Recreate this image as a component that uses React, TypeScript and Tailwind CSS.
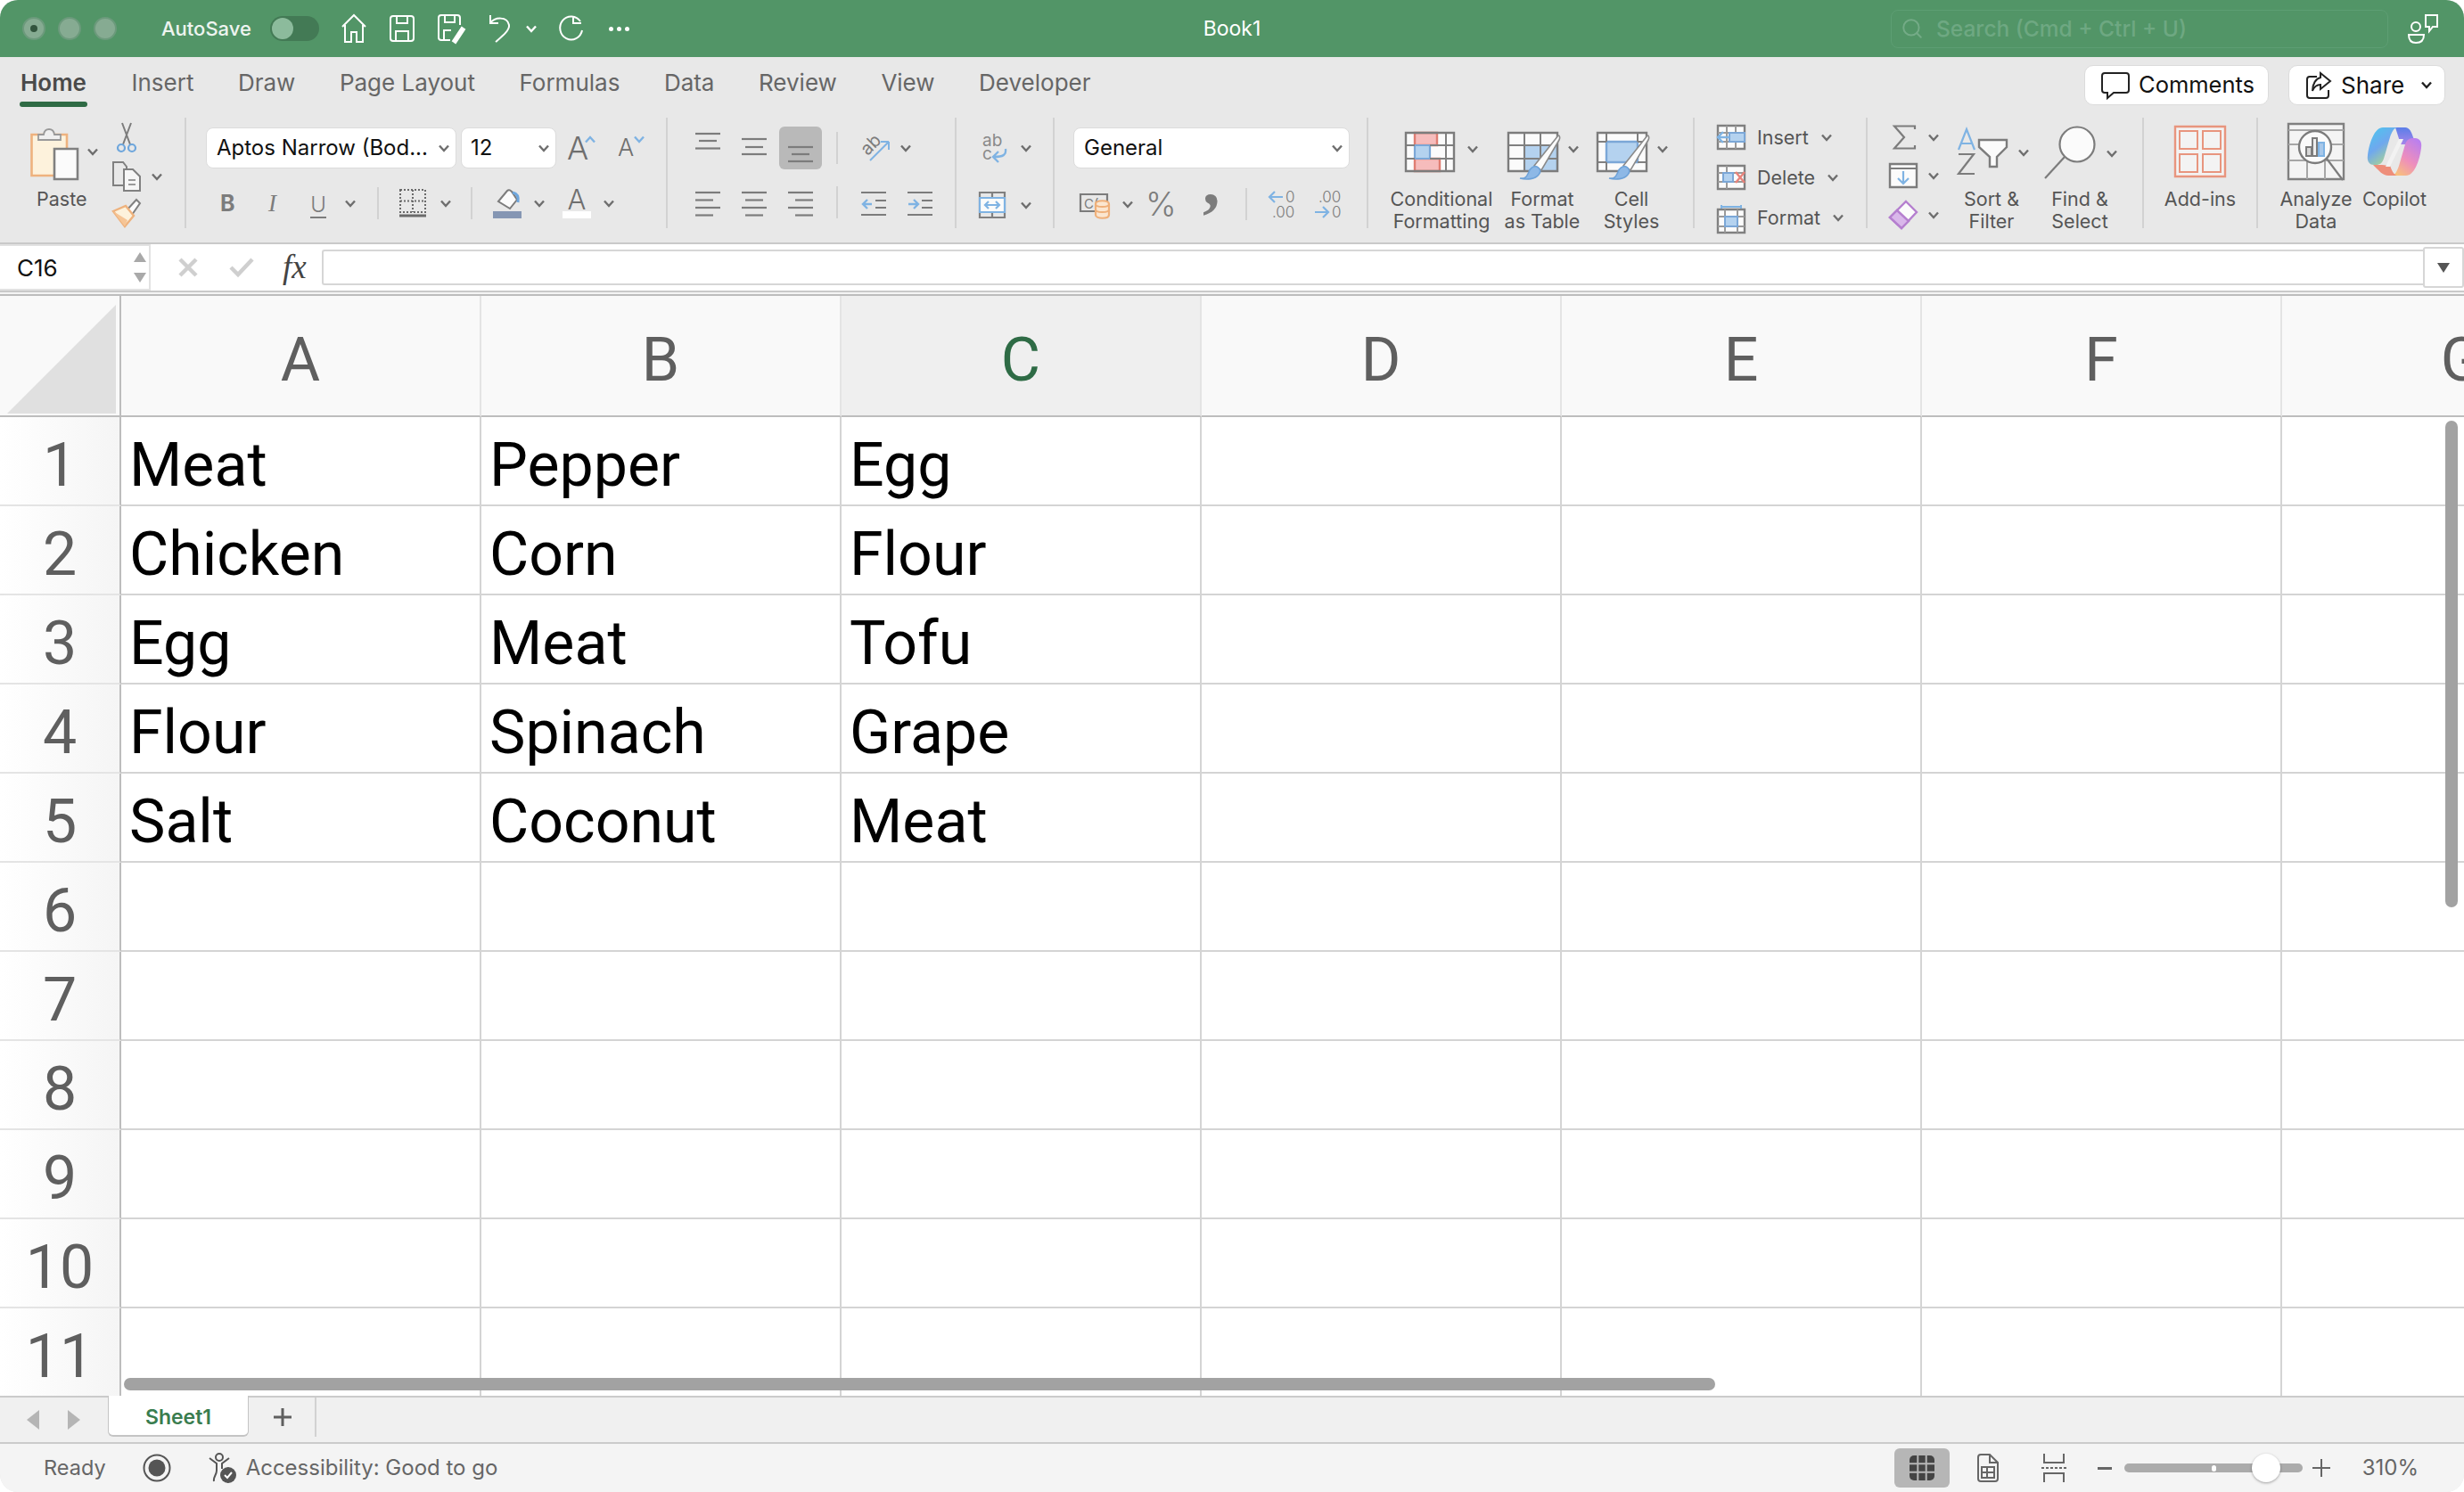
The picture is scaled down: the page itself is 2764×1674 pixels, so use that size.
import type { ReactNode } from "react";
import { Search } from "lucide-react";

const columns = ["A", "B", "C", "D", "E", "F", "G"];
const rows = [1, 2, 3, 4, 5, 6, 7, 8, 9, 10, 11];
const data: Record<number, string[]> = {
  1: ["Meat", "Pepper", "Egg"],
  2: ["Chicken", "Corn", "Flour"],
  3: ["Egg", "Meat", "Tofu"],
  4: ["Flour", "Spinach", "Grape"],
  5: ["Salt", "Coconut", "Meat"],
};
const tabs = ["Home", "Insert", "Draw", "Page Layout", "Formulas", "Data", "Review", "View", "Developer"];

const GRAY = "#7c7c7c";
const BLUE = "#7fb3e3";
const PAPER = "#fbfbfb";

function Caret({ className = "", color = "#6e6e6e" }: { className?: string; color?: string }) {
  return (
    <svg width="12" height="9" viewBox="0 0 12 9" className={`shrink-0 ${className}`} fill="none" stroke={color} strokeWidth="2.4">
      <path d="M1 1.5 6 7l5-5.5" />
    </svg>
  );
}

function Icon({ w, h, children, className = "" }: { w: number; h: number; children: ReactNode; className?: string }) {
  return (
    <svg width={w} height={h} viewBox={`0 0 ${w} ${h}`} className={`shrink-0 overflow-visible ${className}`} fill="none" stroke={GRAY} strokeWidth="2">
      {children}
    </svg>
  );
}

// three lines for the vertical alignment buttons, four for the horizontal ones
function Lines({ ys, align = "center", height = 48 }: { ys: number[]; align?: "left" | "center" | "right"; height?: number }) {
  return (
    <Icon w={28} h={height}>
      {ys.map((y, i) => {
        const short = i % 2 === 1;
        const x1 = !short ? 0 : align === "left" ? 0 : align === "center" ? 4 : 8;
        const x2 = !short ? 28 : align === "left" ? 20 : align === "center" ? 24 : 28;
        return <path key={y} d={`M${x1} ${y}H${x2}`} strokeWidth="2.2" />;
      })}
    </Icon>
  );
}

function Indent({ flip = false }: { flip?: boolean }) {
  return (
    <Icon w={28} h={32}>
      <path d="M0 5H28M16 14H28M16 22H28M0 30H28" strokeWidth="2.2" />
      {flip ? <path d="M1 18H11M7 13l5 5-5 5" stroke={BLUE} strokeWidth="2.4" /> : <path d="M12 18H2M7 13l-5 5 5 5" stroke={BLUE} strokeWidth="2.4" />}
    </Icon>
  );
}

function Sep({ className = "" }: { className?: string }) {
  return <div className={`w-[2px] h-[36px] bg-[#d2d2d2] shrink-0 ${className}`} />;
}

function BigButton({ label, width, children, className = "" }: { label: ReactNode; width: number; children: ReactNode; className?: string }) {
  return (
    <div className={`flex flex-col items-center shrink-0 ${className}`} style={{ width }}>
      <div className="h-[79px] shrink-0 flex items-start justify-center">{children}</div>
      <div className="shrink-0 text-[21.5px] leading-[24.5px] text-[#555] text-center whitespace-nowrap">{label}</div>
    </div>
  );
}

function Brush() {
  return (
    <>
      <path d="M30 38 57 4c2 0 2 3 1 5L38 43Z" fill={PAPER} stroke="#8a8a8a" strokeWidth="1.6" />
      <path d="M14 52c7 1 8-3 10-7 1-4 5-7 9-6 4 2 5 6 2 9-4 5-13 6-21 4Z" fill="#8db8e6" stroke="#6ea2d8" strokeWidth="1.6" />
    </>
  );
}

function CellRows() {
  return (
    <div className="flex flex-col gap-[17px] pt-[8px] pl-[25px]">
      <div className="flex items-center h-[28px]">
        <Icon w={32} h={28}>
          <path d="M1 1H31V27H1Z" fill={PAPER} stroke="#808080" strokeWidth="2.4" />
          <path d="M1 9H31M1 19H31M11 1V27M21 1V27" stroke="#9a9a9a" />
          <path d="M14 9H31V19H14Z" fill="#b4d2ef" stroke="#7ba7d7" />
          <path d="M14 14H2M7 8l-6 6 6 6" stroke={BLUE} strokeWidth="2.4" />
        </Icon>
        <span className="ml-[13px] text-[21.5px] text-[#555]">Insert</span>
        <Caret className="ml-[14px]" />
      </div>
      <div className="flex items-center h-[28px]">
        <Icon w={32} h={28}>
          <path d="M1 1H31V27H1Z" fill={PAPER} stroke="#808080" strokeWidth="2.4" />
          <path d="M1 9H31M1 19H31M11 1V27" stroke="#9a9a9a" />
          <path d="M7 9H18V19H7Z" fill="#b4d2ef" stroke="#7ba7d7" />
          <path d="M21 8 31 20M31 8 21 20" stroke="#e8827a" strokeWidth="2.4" />
        </Icon>
        <span className="ml-[13px] text-[21.5px] text-[#555]">Delete</span>
        <Caret className="ml-[14px]" />
      </div>
      <div className="flex items-center h-[28px]">
        <Icon w={32} h={32} className="mt-[4px]">
          <path d="M1 5H31V31H1Z" fill={PAPER} stroke="#808080" strokeWidth="2.4" />
          <path d="M1 13H31M1 24H31M9 5V31M23 5V31" stroke="#9a9a9a" />
          <path d="M9 13H23V24H9Z" fill="#b4d2ef" stroke="#7ba7d7" />
          <path d="M5 0V4M27 0V4M5 2H27" stroke={BLUE} />
        </Icon>
        <span className="ml-[13px] text-[21.5px] text-[#555]">Format</span>
        <Caret className="ml-[14px]" />
      </div>
    </div>
  );
}

function Ribbon() {
  return (
    <div className="h-[152px] shrink-0 flex pt-[12px] text-[#555]">
      {/* clipboard */}
      <div className="w-[209px] h-[124px] border-r-2 border-[#d2d2d2] flex shrink-0">
        <div className="w-[122px] flex flex-col">
          <div className="flex items-start h-[76px] pt-[11px] pl-[34px]">
            <Icon w={55} h={60}>
              <path d="M1.5 8H41V54H1.5Z" fill="#fdf2dc" stroke="#eeb27e" strokeWidth="2.6" />
              <path d="M9 14V8H15C16 0 26 0 27 8H34V14Z" fill="#efefef" stroke="#999" strokeWidth="1.8" />
              <path d="M27 24H53V58H27Z" fill={PAPER} stroke="#808080" strokeWidth="2.6" />
            </Icon>
            <Caret className="ml-[9px] mt-[23px]" />
          </div>
          <div className="text-[21.5px] leading-[24px] text-[#555] pl-[41px] mt-[3px]">Paste</div>
        </div>
        <div className="flex flex-col pl-[4px]">
          <div className="h-[44px] pl-[5px] pt-[6px]">
            <Icon w={22} h={34}>
              <path d="M6 0 15 24M16 0 7 24" stroke="#7c7c7c" />
              <circle cx="5" cy="28" r="4" stroke="#6ea6dc" strokeWidth="2.2" />
              <circle cx="17" cy="28" r="4" stroke="#6ea6dc" strokeWidth="2.2" />
            </Icon>
          </div>
          <div className="h-[44px] flex items-center">
            <Icon w={32} h={34}>
              <path d="M14 27H1V1H12L16 6V10" stroke="#808080" />
              <path d="M13 9H23L31 17V33H13Z" fill="#f6f6f6" stroke="#808080" />
              <path d="M18 21H26M18 26H26" strokeWidth="1.6" />
            </Icon>
            <Caret className="ml-[12px]" />
          </div>
          <div className="h-[36px] pt-[3px]">
            <Icon w={32} h={32}>
              <path d="M16 13 27 1l4 4-9 13" fill={PAPER} stroke="#808080" />
              <path d="M1 14 15 8l9 11-10 12Z" fill="#fdf2dc" stroke="#eeb27e" strokeWidth="2.4" />
              <path d="M1 14 17 24 14 31Z" fill="#f6c596" stroke="none" />
            </Icon>
          </div>
        </div>
      </div>

      {/* font */}
      <div className="w-[540px] h-[124px] border-r-2 border-[#d2d2d2] shrink-0 pl-[22px] flex flex-col">
        <div className="flex items-center h-[46px] mt-[11px]">
          <div className="w-[281px] h-[46px] bg-white rounded-[8px] border border-[#dcdcdc] flex items-center pl-[11px] pr-[7px] justify-between">
            <span className="text-[24px] text-[#111] whitespace-nowrap">Aptos Narrow (Bod...</span>
            <Caret />
          </div>
          <div className="w-[107px] h-[46px] ml-[5px] bg-white rounded-[8px] border border-[#dcdcdc] flex items-center pl-[10px] pr-[7px] justify-between">
            <span className="text-[24px] text-[#111]">12</span>
            <Caret />
          </div>
          <div className="ml-[12px] flex items-start w-[39px]">
            <span className="text-[36px] leading-[44px] font-light text-[#6f6f6f]">A</span>
            <Caret className="rotate-180 mt-[8px] ml-[-4px]" color={BLUE} />
          </div>
          <div className="ml-[18px] flex items-start">
            <span className="text-[27px] leading-[44px] font-light text-[#6f6f6f]">A</span>
            <Caret className="mt-[8px]" color={BLUE} />
          </div>
        </div>
        <div className="flex items-center h-[36px] mt-[21px] pl-[16px]">
          <span className="w-[54px] text-[25px] leading-[36px] font-bold text-[#7c7c7c]">B</span>
          <span className="w-[47px] text-[27px] leading-[36px] italic text-[#7c7c7c] font-['Liberation_Serif',serif]">I</span>
          <span className="w-[18px] text-[24px] leading-[36px] font-light text-[#7c7c7c] border-b-2 border-[#7c7c7c] h-[33px] flex justify-center">U</span>
          <Caret className="ml-[21px]" />
          <Sep className="ml-[24px]" />
          <Icon w={30} h={32} className="ml-[23px]">
            <path d="M1 1H29V26H1ZM1 13.5H29M15 1V26" strokeDasharray="2 2" stroke="#6a6a6a" />
            <path d="M0 30H30" stroke="#6a6a6a" strokeWidth="3" />
          </Icon>
          <Caret className="ml-[16px]" />
          <Sep className="ml-[22px]" />
          <Icon w={32} h={34} className="ml-[23px]">
            <path d="M6 15 16 3c2-2 4 0 5 1l6 9-8 10Z" fill={PAPER} stroke="#7c7c7c" />
            <path d="M22 5c5 1 7 5 6 11" stroke="#6ea6dc" strokeWidth="3" />
            <path d="M0 26H32V34H0Z" fill="#8596b3" stroke="none" />
          </Icon>
          <Caret className="ml-[14px]" />
          <div className="ml-[20px] w-[32px] h-[34px] flex flex-col items-center">
            <span className="text-[31px] leading-[26px] font-light text-[#6f6f6f]">A</span>
            <div className="w-[32px] h-[8px] bg-white" />
          </div>
          <Caret className="ml-[14px]" />
        </div>
      </div>

      {/* alignment */}
      <div className="w-[324px] h-[124px] border-r-2 border-[#d2d2d2] shrink-0 pl-[31px] flex flex-col">
        <div className="flex items-center h-[48px] mt-[10px]">
          <Lines ys={[8, 16, 24.5]} />
          <div className="ml-[24px]"><Lines ys={[14, 23, 31]} /></div>
          <div className="ml-[14px] w-[48px] h-[48px] rounded-[6px] bg-[#b9b9b9] flex justify-center"><Lines ys={[23, 31, 39]} /></div>
          <Sep className="ml-[16px]" />
          <Icon w={34} h={34} className="ml-[24px]">
            <path d="M12 31 33 10M33 10h-9M33 10v9" stroke={BLUE} />
            <text x="2" y="21" fontSize="20" fill={GRAY} stroke="none" transform="rotate(-45 12 15)" fontFamily="Inter">ab</text>
          </Icon>
          <Caret className="ml-[12px]" />
        </div>
        <div className="flex items-center h-[32px] mt-[21px]">
          <Lines ys={[5, 13.5, 22, 30.5]} align="left" height={32} />
          <div className="ml-[24px]"><Lines ys={[5, 13.5, 22, 30.5]} height={32} /></div>
          <div className="ml-[24px]"><Lines ys={[5, 13.5, 22, 30.5]} align="right" height={32} /></div>
          <Sep className="ml-[26px]" />
          <div className="ml-[26px]"><Indent /></div>
          <div className="ml-[24px]"><Indent flip /></div>
        </div>
      </div>

      {/* wrap and merge */}
      <div className="w-[110px] h-[124px] border-r-2 border-[#d2d2d2] shrink-0 pl-[25px] flex flex-col">
        <div className="flex items-center h-[48px] mt-[10px]">
          <Icon w={32} h={34}>
            <text x="4" y="15" fontSize="19" fill="#8a8a8a" stroke="none" fontFamily="Inter">ab</text>
            <text x="4" y="30" fontSize="19" fill="#8a8a8a" stroke="none" fontFamily="Inter">c</text>
            <path d="M30 18c1 7-3 9-13 9M22 21l-6 6 6 6" stroke={BLUE} strokeWidth="2.4" />
          </Icon>
          <Caret className="ml-[15px]" />
        </div>
        <div className="flex items-center h-[32px] mt-[24px]">
          <Icon w={30} h={30}>
            <path d="M1 1H29V29H1ZM1 7H29M1 23H29M15 1V7M15 23V29" stroke="#808080" strokeWidth="2.2" />
            <path d="M1 7H29V23H1Z" fill={PAPER} stroke={BLUE} strokeWidth="2.2" />
            <path d="M7 15H23M11 11l-4 4 4 4M19 11l4 4-4 4" stroke={BLUE} strokeWidth="2.2" />
          </Icon>
          <Caret className="ml-[17px]" />
        </div>
      </div>

      {/* number */}
      <div className="w-[352px] h-[124px] border-r-2 border-[#d2d2d2] shrink-0 pl-[21px] flex flex-col">
        <div className="w-[310px] h-[46px] mt-[11px] bg-white rounded-[8px] border border-[#dcdcdc] flex items-center pl-[11px] pr-[7px] justify-between">
          <span className="text-[24px] text-[#111]">General</span>
          <Caret />
        </div>
        <div className="flex items-center h-[36px] mt-[22px] pl-[7px]">
          <Icon w={34} h={34}>
            <path d="M1 6H31V25H1Z" stroke="#7c7c7c" strokeWidth="2.2" />
            <text x="5" y="22" fontSize="15" fill="#7c7c7c" stroke="none" fontFamily="Inter">C(</text>
            <path d="M18 17c0-5 15-5 15 0V29c0 5-15 5-15 0Z" fill="#fbe6d0" stroke="#efb07a" strokeWidth="2.2" />
            <path d="M18 17c0 4 15 4 15 0M18 23c0 4 15 4 15 0" stroke="#efb07a" />
          </Icon>
          <Caret className="ml-[14px]" />
          <span className="ml-[14px] w-[54px] text-[37px] leading-[36px] font-light text-[#7c7c7c]">%</span>
          <Icon w={20} h={36} className="ml-[10px]">
            <text x="0" y="19" fontSize="78" fontWeight="700" fill="#7c7c7c" stroke="none" fontFamily="Liberation Serif">,</text>
          </Icon>
          <Sep className="ml-[28px]" />
          <Icon w={32} h={34} className="ml-[23px]">
            <path d="M17 9H2M8 3 2 9l6 6" stroke={BLUE} strokeWidth="2.2" />
            <text x="20" y="15" fontSize="17" fontWeight="300" fill={GRAY} stroke="none" fontFamily="Inter">0</text>
            <text x="5" y="32" fontSize="17" fontWeight="300" fill={GRAY} stroke="none" fontFamily="Inter">.00</text>
          </Icon>
          <Icon w={32} h={34} className="ml-[20px]">
            <text x="5" y="15" fontSize="17" fontWeight="300" fill={GRAY} stroke="none" fontFamily="Inter">.00</text>
            <path d="M1 26H16M10 20l6 6-6 6" stroke={BLUE} strokeWidth="2.2" />
            <text x="20" y="32" fontSize="17" fontWeight="300" fill={GRAY} stroke="none" fontFamily="Inter">0</text>
          </Icon>
        </div>
      </div>

      {/* styles */}
      <div className="w-[366px] h-[124px] border-r-2 border-[#d2d2d2] shrink-0 flex pl-[16px]">
        <BigButton width={132} label={<>Conditional<br />Formatting</>}>
          <div className="flex items-center mt-[16px]">
            <Icon w={56} h={46}>
              <path d="M1 1H55V44H1Z" fill={PAPER} />
              <path d="M11 1H36V15H11ZM11 30H39V44H11Z" fill="#f6bcbc" stroke="#df7d72" strokeWidth="2.4" />
              <path d="M11 15H28V30H11Z" fill="#b4d2ef" stroke="#7ba7d7" strokeWidth="2.2" />
              <path d="M1 15H11M28 15H55M1 30H11M28 30H55M46 1V44" stroke="#808080" />
              <path d="M1 1H55V44H1Z" stroke="#7c7c7c" strokeWidth="2.4" />
            </Icon>
            <Caret className="ml-[14px] mb-[8px]" />
          </div>
        </BigButton>
        <BigButton width={94} label={<>Format<br />as Table</>}>
          <div className="flex items-center pl-[2px] mt-[16px]">
            <Icon w={60} h={56}>
              <path d="M1 1H56V44H1Z" fill={PAPER} />
              <path d="M19 15H56V44H19Z" fill="#b4d2ef" stroke="#7ba7d7" strokeWidth="2.2" />
              <path d="M1 15H56M1 30H56M19 1V44M37 1V44" stroke="#808080" />
              <path d="M1 1H56V44H1Z" stroke="#7c7c7c" strokeWidth="2.4" />
              <Brush />
            </Icon>
            <Caret className="ml-[8px] mb-[18px]" />
          </div>
        </BigButton>
        <BigButton width={106} label={<>Cell<br />Styles</>}>
          <div className="flex items-center pl-[2px] mt-[16px]">
            <Icon w={60} h={56}>
              <path d="M1 1H56V44H1Z" fill={PAPER} />
              <path d="M11 11H46V34H11Z" fill="#b4d2ef" stroke="#7ba7d7" strokeWidth="2.4" />
              <path d="M1 11H11M46 11H56M1 34H11M46 34H56M11 1V11M46 1V11M11 34V44" stroke="#808080" />
              <path d="M1 1H56V44H1Z" stroke="#7c7c7c" strokeWidth="2.4" />
              <Brush />
            </Icon>
            <Caret className="ml-[8px] mb-[18px]" />
          </div>
        </BigButton>
      </div>

      {/* cells */}
      <div className="w-[194px] h-[124px] border-r-2 border-[#d2d2d2] shrink-0">
        <CellRows />
      </div>

      {/* editing */}
      <div className="w-[310px] h-[124px] border-r-2 border-[#d2d2d2] shrink-0 flex pl-[24px]">
        <div className="flex flex-col gap-[15px] pt-[8px] w-[68px]">
          <div className="flex items-center h-[28px]">
            <Icon w={32} h={28}><path d="M29 5V1.5H6l11 12.5L6 26.5h23V23" strokeWidth="2.2" /></Icon>
            <Caret className="ml-[12px]" />
          </div>
          <div className="flex items-center h-[30px]">
            <Icon w={32} h={28}>
              <path d="M1 1H31V27H1Z" fill={PAPER} stroke="#7c7c7c" strokeWidth="2.4" />
              <path d="M1 6H31" stroke="#7c7c7c" />
              <path d="M16 9V23M10 17l6 6 6-6" stroke={BLUE} strokeWidth="2.2" />
            </Icon>
            <Caret className="ml-[12px]" />
          </div>
          <div className="flex items-center h-[30px]">
            <Icon w={32} h={32}>
              <path d="M19 1 31 13 14 31 1 19Z" fill={PAPER} stroke="#b57fcf" strokeWidth="2.4" />
              <path d="M9 11 22 23 14 31 1 19Z" fill="#d9b7ea" stroke="#b57fcf" strokeWidth="2.4" />
            </Icon>
            <Caret className="ml-[12px]" />
          </div>
        </div>
        <BigButton width={94} label={<>Sort &amp;<br />Filter</>}>
          <div className="flex items-center pl-[3px] mt-[12px]">
            <Icon w={58} h={54}>
              <path d="M2 24 11 1l9 23M5 17H17" stroke={BLUE} strokeWidth="2.2" />
              <path d="M2 29H19L2 51H20" stroke="#7c7c7c" strokeWidth="2.2" />
              <path d="M25 13H56V21L45 32V43H37V32L25 21Z" fill={PAPER} stroke="#7c7c7c" strokeWidth="2.4" />
            </Icon>
            <Caret className="ml-[11px]" />
          </div>
        </BigButton>
        <BigButton width={104} label={<>Find &amp;<br />Select</>}>
          <div className="flex items-center pl-[2px] mt-[10px]">
            <Icon w={60} h={60}>
              <circle cx="37" cy="20" r="19.5" fill={PAPER} stroke="#7c7c7c" strokeWidth="2.2" />
              <path d="M23 34 1 58" stroke="#7c7c7c" strokeWidth="2.2" />
            </Icon>
            <Caret className="ml-[10px]" />
          </div>
        </BigButton>
      </div>

      {/* add-ins */}
      <div className="w-[128px] h-[124px] border-r-2 border-[#d2d2d2] shrink-0 flex justify-center">
        <BigButton width={100} label="Add-ins">
          <Icon w={58} h={58} className="mt-[9px]">
            <path d="M1 1H57V57H1Z" stroke="#e8957e" strokeWidth="2.4" fill="#f3f3f3" />
            <path d="M6 6H26V26H6ZM32 6H52V26H32ZM6 32H26V52H6ZM32 32H52V52H32Z" stroke="#e8957e" />
          </Icon>
        </BigButton>
      </div>

      {/* data and copilot */}
      <div className="flex shrink-0 pl-[26px]">
        <BigButton width={78} label={<>Analyze<br />Data</>}>
          <Icon w={64} h={66} className="mt-[6px]">
            <path d="M1 1H63V63H1Z" fill="#f4f4f4" stroke="#808080" strokeWidth="2.4" />
            <path d="M1 8H63M1 24H63M1 42H63M22 42V63M42 42V63" stroke="#a6a6a6" />
            <circle cx="31" cy="27" r="18" fill={PAPER} stroke="#7c7c7c" strokeWidth="2.4" />
            <path d="M21 27H27V37H21Z" fill="#d8d8d8" stroke="#7c7c7c" />
            <path d="M28 17H33V37H28Z" fill="#eee" stroke="#7c7c7c" />
            <path d="M35 22H41V37H35Z" fill="#a8c8ea" stroke={BLUE} />
            <path d="M44 40 62 64" stroke="#7c7c7c" strokeWidth="2.2" />
          </Icon>
        </BigButton>
        <BigButton width={78} label="Copilot" className="ml-[10px]">
          <svg width="62" height="54" viewBox="0 0 62 54" className="mt-[11px]">
            <defs>
              <linearGradient id="copA" x1="0.2" y1="0" x2="0.8" y2="1">
                <stop offset="0" stopColor="#4fc4ee" />
                <stop offset="0.45" stopColor="#6fa8ee" />
                <stop offset="1" stopColor="#b6de7e" />
              </linearGradient>
              <linearGradient id="copB" x1="0.8" y1="0" x2="0.2" y2="1">
                <stop offset="0" stopColor="#b97ff0" />
                <stop offset="0.55" stopColor="#ee8ebc" />
                <stop offset="1" stopColor="#f8c27a" />
              </linearGradient>
              <linearGradient id="copC" x1="0" y1="0" x2="0" y2="1">
                <stop offset="0" stopColor="#5b7ee8" />
                <stop offset="1" stopColor="#a585ea" />
              </linearGradient>
            </defs>
            <path d="M32 0h11c5 0 7 5 9 11l3 8H38Z" fill="url(#copC)" />
            <path d="M18 0h16c-4 1-6 5-8 11l-7 24c-2 5-4 7-9 7H8c-6 0-8-5-7-11C3 16 9 0 18 0Z" fill="url(#copA)" />
            <path d="M44 54H28c4-1 6-5 8-11l7-24c2-5 4-7 9-7h2c6 0 8 5 7 11-2 15-8 31-17 31Z" fill="url(#copB)" />
            <path d="M7 42h10l9 1c2 5 4 10 8 11H24c-6 0-10-5-17-12Z" fill="#ee8e7a" />
            <path d="M36 13h5L26 44h-5Z" fill="#f2f2f2" />
          </svg>
        </BigButton>
      </div>
    </div>
  );
}

export default function App() {
  return (
    <div className="w-[2764px] h-[1674px] bg-white overflow-hidden font-['Inter','Liberation_Sans',sans-serif]">
      <div className="w-full h-full rounded-[20px] overflow-hidden flex flex-col bg-[#e8e8e8] relative">
        {/* title bar */}
        <div className="h-[64px] shrink-0 bg-[#529567] flex items-center relative">
          <div className="flex items-center gap-[14px] pl-[25px]">
            <div className="w-[26px] h-[26px] rounded-full bg-[#86ab92] border-2 border-[#6c9a7c] flex items-center justify-center">
              <div className="w-[8px] h-[8px] rounded-full bg-[#32543d]" />
            </div>
            <div className="w-[26px] h-[26px] rounded-full bg-[#86ab92] border-2 border-[#6c9a7c]" />
            <div className="w-[26px] h-[26px] rounded-full bg-[#86ab92] border-2 border-[#6c9a7c]" />
          </div>
          <span className="ml-[50px] text-[22px] font-medium text-white/90">AutoSave</span>
          <div className="ml-[21px] w-[55px] h-[28px] rounded-full bg-[#437a55] flex items-center pl-[2px]">
            <div className="w-[24px] h-[24px] rounded-full bg-[#8cbb9c]" />
          </div>
          <Icon w={30} h={32} className="ml-[24px]">
            <path d="M2 14 15 1l13 13M5 12V31H12V20H18V31H25V12" stroke="#fff" />
          </Icon>
          <Icon w={28} h={30} className="ml-[25px]">
            <path d="M1 4a3 3 0 0 1 3-3H24a3 3 0 0 1 3 3V26a3 3 0 0 1-3 3H4a3 3 0 0 1-3-3ZM8 1V9H20V1M7 29V18H21V29" stroke="#fff" />
          </Icon>
          <Icon w={30} h={32} className="ml-[26px]">
            <path d="M14 29H4a3 3 0 0 1-3-3V4a3 3 0 0 1 3-3H22a3 3 0 0 1 3 3V12M8 1V9H19V1M7 29V18H15" stroke="#fff" />
            <path d="M17 30 27 15l3 2-10 15Z" fill="#fff" stroke="#fff" />
          </Icon>
          <Icon w={26} h={32} className="ml-[28px]">
            <path d="M1 1V10H10M1 10C6 3 20 2 22 12 23 18 14 25 7 31" stroke="#fff" />
          </Icon>
          <Caret className="ml-[15px]" color="#fff" />
          <Icon w={28} h={30} className="ml-[24px]">
            <path d="M17 1V9H26M25 7A12.5 13 0 1 0 27 17" stroke="#fff" />
          </Icon>
          <div className="ml-[29px] flex gap-[4px]">
            <div className="w-[5px] h-[5px] rounded-full bg-white" />
            <div className="w-[5px] h-[5px] rounded-full bg-white" />
            <div className="w-[5px] h-[5px] rounded-full bg-white" />
          </div>
          <div className="absolute left-0 right-0 top-0 h-[64px] flex items-center justify-center pointer-events-none">
            <span className="text-[23px] text-white">Book1</span>
          </div>
          <div className="ml-auto mr-[85px] w-[558px] h-[43px] rounded-[8px] border border-[#5d9e73] flex items-center pl-[10px] gap-[14px]">
            <Search size={26} color="#74ab87" strokeWidth={1.8} />
            <span className="text-[24.5px] font-medium text-[#6ea882] whitespace-nowrap">Search (Cmd + Ctrl + U)</span>
          </div>
          <Icon w={34} h={34} className="absolute right-[29px] top-[15px]">
            <path d="M20 2H33V15H28L24 20V15H20Z" stroke="#fff" />
            <circle cx="9" cy="15" r="5" stroke="#fff" />
            <path d="M1 24H18C18 31 14 33 9 33S1 31 1 24Z" stroke="#fff" />
          </Icon>
        </div>

        {/* tabs */}
        <div className="h-[56px] shrink-0 flex items-start pl-[22px] pr-[21px] relative">
          <div className="flex gap-[49.5px] pt-[13px]">
            {tabs.map((tab, i) => (
              <div key={tab} className="flex flex-col items-center">
                <span className={`text-[26px] leading-[32px] whitespace-nowrap ${i === 0 ? "font-semibold text-[#4a4a4a]" : "text-[#666]"}`}>{tab}</span>
                {i === 0 && <div className="w-[76px] h-[6px] rounded-full bg-[#2f6b45] mt-[5px]" />}
              </div>
            ))}
          </div>
          <div className="ml-auto flex gap-[22px] pt-[9px]">
            <div className="w-[207px] h-[45px] bg-white rounded-[10px] border border-[#dcdcdc] flex items-center pl-[18px] gap-[10px]">
              <Icon w={32} h={30}><path d="M4 1H28a3 3 0 0 1 3 3V20a3 3 0 0 1-3 3H14L7 29V23H4a3 3 0 0 1-3-3V4a3 3 0 0 1 3-3Z" stroke="#222" /></Icon>
              <span className="text-[25.5px] text-[#111]">Comments</span>
            </div>
            <div className="w-[176px] h-[45px] bg-white rounded-[10px] border border-[#dcdcdc] flex items-center pl-[19px] gap-[11px]">
              <Icon w={28} h={30}>
                <path d="M12 5H4a3 3 0 0 0-3 3V26a3 3 0 0 0 3 3H22a3 3 0 0 0 3-3V20" stroke="#222" />
                <path d="M16 1 27 10 16 19V14C12 14 9 16 7 21 7 13 11 7 16 6Z" stroke="#222" />
              </Icon>
              <span className="text-[26px] text-[#111]">Share</span>
              <Caret className="ml-[8px]" color="#222" />
            </div>
          </div>
        </div>

        <Ribbon />

        {/* formula bar */}
        <div className="h-[56px] shrink-0 border-t-[2px] border-b-[2px] border-[#c9c9c9] bg-white flex items-center relative">
          <div className="w-[169px] h-[52px] bg-white flex items-center justify-between pl-[19px] pr-[3px] border-2 border-l-0 border-[#e2e2e2]">
            <span className="text-[26px] text-[#111]">C16</span>
            <div className="flex flex-col gap-[12px]">
              <div className="w-0 h-0 border-l-[7px] border-r-[7px] border-b-[11px] border-l-transparent border-r-transparent border-b-[#a9a9a9]" />
              <div className="w-0 h-0 border-l-[7px] border-r-[7px] border-t-[11px] border-l-transparent border-r-transparent border-t-[#a9a9a9]" />
            </div>
          </div>
          <Icon w={22} h={22} className="ml-[31px]"><path d="M2 2 20 20M20 2 2 20" stroke="#cfcfcf" strokeWidth="4.5" /></Icon>
          <Icon w={28} h={22} className="ml-[35px]"><path d="M2 11l8 8L26 2" stroke="#cfcfcf" strokeWidth="4.5" /></Icon>
          <span className="ml-[32px] w-[44px] text-[37px] leading-[44px] italic text-[#444] font-['Liberation_Serif',serif]">fx</span>
          <div className="h-[40px] flex-1 border-y-2 border-l-2 border-[#d6d6d6] rounded-l-[3px] bg-white" />
          <div className="w-[46px] h-[46px] border-2 border-[#d6d6d6] rounded-[3px] flex items-center justify-center shrink-0">
            <div className="w-0 h-0 border-l-[7px] border-r-[7px] border-t-[11px] border-l-transparent border-r-transparent border-t-[#555]" />
          </div>
        </div>
        <div className="h-[4px] shrink-0 bg-[#f4f4f4] border-b-2 border-[#bdbdbd]" />

        {/* sheet */}
        <div className="flex-1 min-h-0 overflow-hidden bg-white relative font-['Roboto','Liberation_Sans',sans-serif]">
          <div className="grid grid-cols-[136px_repeat(7,404px)] grid-rows-[136px_repeat(11,100px)]">
            <div className="bg-[#f9f9f9] border-r-[2px] border-b-[2px] border-r-[#bdbdbd] border-b-[#bdbdbd] flex items-end justify-end pr-[4px] pb-[2px]">
              <div className="w-[122px] h-[122px] bg-[#e0e0e0] [clip-path:polygon(100%_0,100%_100%,0_100%)]" />
            </div>
            {columns.map((col) => (
              <div
                key={col}
                className={`border-r-[2px] border-b-[2px] border-r-[#e4e4e4] border-b-[#bdbdbd] flex items-center justify-center pt-[10px] text-[68px] ${
                  col === "C" ? "bg-[#efefef] text-[#2e6b45]" : "bg-[#f9f9f9] text-[#5f5f5f]"
                }`}
              >
                {col}
              </div>
            ))}
            {rows.map((row) => (
              <div key={row} className="contents">
                <div className="bg-gradient-to-r from-white to-[#f5f5f5] border-r-[2px] border-b-[2px] border-r-[#bdbdbd] border-b-[#e4e4e4] flex items-center justify-center pt-[9px] text-[68px] text-[#5f5f5f]">
                  {row}
                </div>
                {columns.map((col, i) => (
                  <div key={col} className="border-r-[2px] border-b-[2px] border-[#d4d4d4] flex items-center pl-[9px] pt-[9px] text-[68px] text-black whitespace-nowrap overflow-hidden">
                    {data[row]?.[i] ?? ""}
                  </div>
                ))}
              </div>
            ))}
          </div>
          <div className="absolute left-[2743px] top-[140px] w-[14px] h-[546px] rounded-full bg-[#a2a2a2]" />
          <div className="absolute left-[139px] top-[1214px] w-[1785px] h-[14px] rounded-full bg-[#a2a2a2]" />
        </div>

        {/* sheet tabs */}
        <div className="h-[54px] shrink-0 bg-[#f0f0f0] border-t-[2px] border-b-[2px] border-[#cbcbcb] flex items-start">
          <div className="w-[121px] h-full flex items-center pl-[30px] gap-[32px]">
            <div className="w-0 h-0 border-y-[11px] border-r-[14px] border-y-transparent border-r-[#b5b5b5]" />
            <div className="w-0 h-0 border-y-[11px] border-l-[14px] border-y-transparent border-l-[#b5b5b5]" />
          </div>
          <div className="w-[158px] h-[46px] mt-[-2px] pt-[5px] bg-white rounded-b-[6px] border-x border-b-2 border-[#c4c4c4] flex items-center justify-center text-[23px] font-semibold text-[#3a7d4f] font-['Inter',sans-serif]">
            Sheet1
          </div>
          <div className="w-[76px] h-[44px] border-r-2 border-[#d2d2d2] flex items-center justify-center pl-[2px]">
            <Icon w={20} h={20}><path d="M10 0V20M0 10H20" stroke="#5f5f5f" strokeWidth="3" /></Icon>
          </div>
        </div>

        {/* status bar */}
        <div className="h-[54px] shrink-0 bg-[#f4f4f4] flex items-center text-[24px] text-[#666]">
          <span className="ml-[49px] text-[23.5px]">Ready</span>
          <svg width="32" height="32" viewBox="0 0 32 32" className="ml-[41px] shrink-0">
            <circle cx="16" cy="16" r="14.5" fill="none" stroke="#555" strokeWidth="2" />
            <circle cx="16" cy="16" r="9.5" fill="#555" />
          </svg>
          <Icon w={32} h={34} className="ml-[41px]">
            <circle cx="13" cy="5" r="4" stroke="#555" />
            <path d="M2 6 10 12V20C10 25 6 27 7 32M24 6 16 12V18" stroke="#555" />
            <circle cx="23" cy="25" r="9" fill="#555" stroke="none" />
            <path d="M19 25l3 3 5-6" stroke="#fff" />
          </Icon>
          <span className="ml-[11px]">Accessibility: Good to go</span>
          <div className="ml-auto flex items-center">
            <div className="w-[62px] h-[44px] rounded-[6px] bg-[#b6b6b6] flex items-center justify-center">
              <svg width="28" height="28" viewBox="0 0 28 28">
                <rect width="28" height="28" rx="5" fill="#444" />
                <path d="M9.3 0V28M18.7 0V28M0 9.3H28M0 18.7H28" stroke="#b6b6b6" strokeWidth="2" />
              </svg>
            </div>
            <Icon w={24} h={32} className="ml-[31px]">
              <path d="M1 4a3 3 0 0 1 3-3H14L23 10V28a3 3 0 0 1-3 3H4a3 3 0 0 1-3-3ZM14 1V10H23" stroke="#666" />
              <path d="M5 15H19V27H5ZM5 21H19M11 15V27" stroke="#666" />
            </Icon>
            <Icon w={28} h={32} className="ml-[48px]">
              <path d="M3 0V10H25V0M3 32V22H25V32" stroke="#666" />
              <path d="M0 16H28" stroke="#666" strokeDasharray="3 2" />
            </Icon>
            <div className="ml-[35px] w-[16px] h-[3px] bg-[#666]" />
            <div className="ml-[14px] w-[200px] h-[10px] rounded-full bg-[#ababab] flex items-center relative">
              <div className="w-[5px] h-[7px] rounded-full bg-white ml-[98px]" />
              <div className="absolute left-[143px] top-[-11px] w-[32px] h-[32px] rounded-full bg-white shadow-[0_1px_3px_rgba(0,0,0,0.35)]" />
            </div>
            <Icon w={20} h={20} className="ml-[11px]"><path d="M10 0V20M0 10H20" stroke="#666" /></Icon>
            <span className="ml-[36px] mr-[51px]">310%</span>
          </div>
        </div>
      </div>
    </div>
  );
}
